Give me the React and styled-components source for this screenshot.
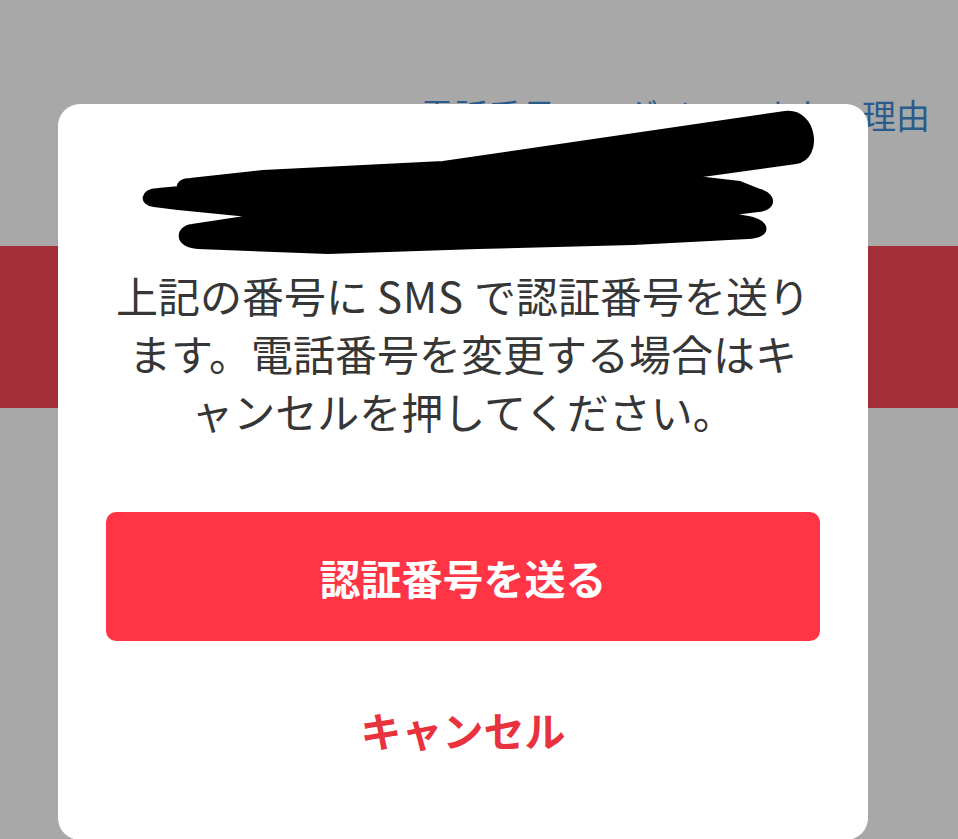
import React from "react";
import styled, { createGlobalStyle } from "styled-components";

const GlobalStyle = createGlobalStyle`
  html, body {
    margin: 0;
    padding: 0;
    background: #a8a8a8;
  }
  body {
    font-family: "Noto Sans CJK JP", "Noto Sans", sans-serif;
    -webkit-font-smoothing: antialiased;
  }
`;

const Page = styled.div`
  position: relative;
  width: 958px;
  height: 839px;
  overflow: hidden;
  background: #a8a8a8;
`;

const HelpLink = styled.div`
  padding: 93px 28px 0 0;
  text-align: right;
  font-size: 34px;
  line-height: 44px;
  color: #2b5b8b;
  white-space: nowrap;
`;

const Band = styled.div`
  margin-top: 109px;
  height: 162px;
  background: #a32e37;
`;

const Dialog = styled.div`
  position: absolute;
  left: 58px;
  top: 104px;
  width: 810px;
  height: 736px;
  background: #ffffff;
  border-radius: 22px;
  display: flex;
  flex-direction: column;
  align-items: center;
`;

const Redaction = styled.svg`
  display: block;
  width: 810px;
  height: 162px;
  flex: none;
`;

const Message = styled.p`
  margin: 0;
  font-size: 42px;
  line-height: 58px;
  color: #363636;
  text-align: center;
  white-space: nowrap;
`;

const Latin = styled.span`
  padding: 0 10px 0 9px;
  letter-spacing: 1px;
`;

const PrimaryButton = styled.button`
  margin-top: 72px;
  width: 714px;
  height: 129px;
  border: none;
  border-radius: 10px;
  background: #ff3445;
  color: #ffffff;
  font-family: inherit;
  font-size: 41px;
  font-weight: 700;
  cursor: pointer;
`;

const TextButton = styled.button`
  margin-top: 58px;
  padding: 0;
  border: none;
  background: none;
  color: #e8333f;
  font-family: inherit;
  font-size: 41px;
  font-weight: 700;
  line-height: 60px;
  cursor: pointer;
`;

// Hand-drawn marker strokes covering the phone number (dialog-local coords).
const scribble =
  "M132 76 L205 68 L385 59 L727 9 " +
  "C757 5 764 54 738 58 " +
  "L630 73 L682 79 L702 87 " +
  "C718 92 716 105 700 106 " +
  "L668 110 L690 114 " +
  "C712 118 712 132 690 133 " +
  "L575 139 L420 143 L270 148 L140 143 " +
  "C118 142 118 124 134 122 " +
  "L200 112 L120 104 L96 101 " +
  "C82 99 84 87 100 86 " +
  "L122 84 C119 80 124 76 132 76 Z";

export default function App() {
  return (
    <Page>
      <GlobalStyle />
      <HelpLink>電話番号でログインできない理由</HelpLink>
      <Band />
      <Dialog role="dialog">
        <Redaction viewBox="0 0 810 162">
          <path d={scribble} fill="#000" stroke="#000" strokeWidth="4" strokeLinejoin="round" />
        </Redaction>
        <Message>
          上記の番号に<Latin>SMS</Latin>で認証番号を送り
          <br />
          ます。電話番号を変更する場合はキ
          <br />
          ャンセルを押してください。
        </Message>
        <PrimaryButton>認証番号を送る</PrimaryButton>
        <TextButton>キャンセル</TextButton>
      </Dialog>
    </Page>
  );
}
